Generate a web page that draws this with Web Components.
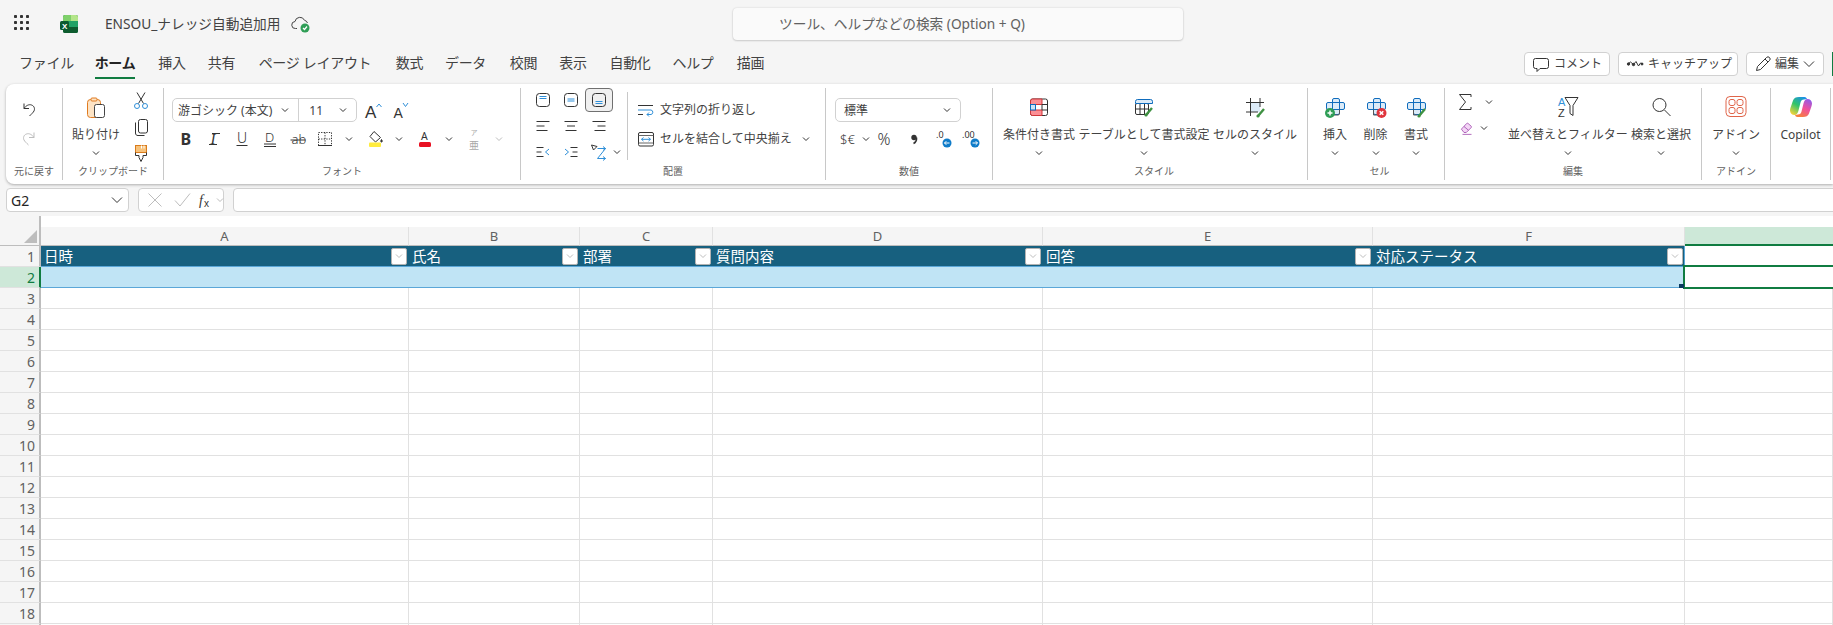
<!DOCTYPE html>
<html lang="ja">
<head>
<meta charset="utf-8">
<title>ENSOU_ナレッジ自動追加用</title>
<style>
html, body { margin: 0; height: 100%; }
body {
  display: flex; flex-direction: column; height: 100vh; overflow: hidden;
  background: #f5f5f5; color: #424242;
  font-family: "Noto Sans", "Noto Sans CJK JP", sans-serif; font-size: 12px;
}
</style>
</head>
<body>
<x-titlebar></x-titlebar>
<x-menubar></x-menubar>
<x-ribbon></x-ribbon>
<x-formulabar></x-formulabar>
<x-sheet></x-sheet>
<script>
((global) => {
  'use strict';

  const D = '#333333', B = '#2f8fd8', FONT = 'Noto Sans, Noto Sans CJK JP, sans-serif', LS = 'Liberation Sans, sans-serif';
  const txt = (x, y, size, s, extra = '') =>
    `<text x="${x}" y="${y}" font-size="${size}" font-family="${FONT}" fill="${D}" stroke="none" ${extra}>${s}</text>`;
  const ls = (x, y, size, s, fill = D) =>
    `<text x="${x}" y="${y}" font-size="${size}" font-family="${LS}" fill="${fill}" stroke="none">${s}</text>`;
  const brush = (x, y) => `<path d="M${x} ${y + 7}l6-7" stroke="#3f9142" stroke-width="2.4" fill="none"/><circle cx="${x}" cy="${y + 7}" r="1.6" fill="#3f9142" stroke="none"/>`;
  const cells = '<rect x="9.500" y="3.500" width="7" height="16" rx="1.500" fill="#dcebf8" stroke="#0f6cbd"/><rect x="3.500" y="7.500" width="18" height="7" rx="1.500" fill="#dcebf8" stroke="#0f6cbd"/><path d="M9.500 7.500v7M16.500 7.500v7" stroke="#0f6cbd" fill="none"/>';

  // 24x24 canvas, centre of the canvas is the centre of the icon
  const ICONS = {
    chev: '<path d="M9 10.500l3 3 3-3"/>',
    chevbig: '<path d="M7 9.500l5 5 5-5"/>',
    undo: '<path d="M7 5.500v5h5M7 10.500c2-3 5-4.500 7.500-3.500 3 1 3.500 4 2.500 6-.8 1.500-2.500 3-4.500 5"/>',
    redo: '<g stroke="#bdbdbd" transform="translate(24 0) scale(-1 1)"><path d="M7 5.500v5h5M7 10.500c2-3 5-4.500 7.500-3.500 3 1 3.500 4 2.500 6-.8 1.500-2.500 3-4.500 5"/></g>',
    paste: '<rect x="3.500" y="3.500" width="13" height="18" rx="3" fill="#fde3c4" stroke="#e07b20"/><rect x="7" y="2" width="6" height="3" rx="1" fill="#fde3c4" stroke="#e07b20"/><rect x="10.500" y="8.500" width="10" height="13" rx="2" fill="#fff" stroke="#444"/>',
    cut: `<path d="M9.500 14.500L16 3.500M14.500 14.500L8 3.500"/><circle cx="8" cy="17" r="2.500" stroke="${B}"/><circle cx="16" cy="17" r="2.500" stroke="${B}"/>`,
    copy: '<rect x="9.500" y="4.500" width="9" height="13.500" rx="2"/><path d="M6.500 7.500v10.500c0 1.800 1 2.500 2.500 2.500h6.500"/>',
    painter: '<rect x="6.500" y="4.500" width="11" height="7" fill="#f7c27b" stroke="#d97b1b"/><path d="M12.500 4.500v3M15 4.500v3" stroke="#fff"/><path d="M6.500 11.500v3h3.500v2l2 4 2-4v-2h3.500v-3"/>',
    grow: ls(6, 19.500, 17, 'A') + `<path d="M17.500 9l2.500-3 2.500 3" stroke="${B}"/>`,
    shrink: ls(6.500, 20, 14, 'A') + `<path d="M16 5l2.500 3.500 2.500-3.500" stroke="${B}"/>`,
    bold: txt(6.500, 18, 16, 'B', 'font-weight="700"'),
    italic: `<text x="8.500" y="17" font-size="15" font-style="italic" font-family="Liberation Serif, serif" fill="${D}" stroke="none">I</text><path d="M7 17.500h8M10 6.500h8"/>`,
    under: txt(7, 16, 14, 'U', 'font-weight="300"') + '<path d="M6.500 18.500h11"/>',
    dunder: txt(7, 15, 13, 'D', 'font-weight="300"') + '<path d="M6 17h12M6 19.500h12"/>',
    strike: txt(5.500, 17, 13, 'ab', 'font-weight="300"') + '<path d="M4.500 13h15"/>',
    border: '<rect x="5.500" y="5.500" width="13" height="13" stroke-dasharray="1.300 1.300"/><path d="M12 5.500v13M5.500 12h13" stroke-dasharray="1.300 1.300"/><path d="M5 18.500h14"/>',
    fill: '<path d="M11 4.500l6.500 6-5 4.500-5.500-5.500z"/><path d="M18.500 12.500c1 1.300 1 2.500 0 2.500s-1-1.200 0-2.500z" fill="#333"/><rect x="6" y="15.500" width="12" height="4.500" rx="1" fill="#ffec3d" stroke="none"/>',
    color: txt(8, 13, 10.500, 'A') + '<rect x="6" y="15" width="12" height="5" rx="1.500" fill="#e81123" stroke="none"/>',
    phonetic: `<text x="8.500" y="7.500" font-size="7" font-family="Noto Sans CJK JP" fill="#a8a8a8" stroke="none">ア</text><text x="7" y="21.500" font-size="10" font-family="Noto Sans CJK JP" fill="#a8a8a8" stroke="none">亜</text>`,
    vtop: `<rect x="5.500" y="5.500" width="13" height="13" rx="3"/><path d="M8.500 8.500h7M8.500 10.500h7" stroke="${B}"/>`,
    vmid: `<rect x="5.500" y="5.500" width="13" height="13" rx="3"/><path d="M8.500 11h7M8.500 13h7" stroke="${B}"/>`,
    vbot: `<rect x="5.500" y="5.500" width="13" height="13" rx="3"/><path d="M8.500 13.500h7M8.500 15.500h7" stroke="${B}"/>`,
    hleft: '<path d="M5.500 7.500h13M5.500 12h8M5.500 16.500h11"/>',
    hcen: '<path d="M5.500 7.500h13M8 12h8M6.500 16.500h11"/>',
    hright: '<path d="M5.500 7.500h13M10.500 12h8M7.500 16.500h11"/>',
    outdent: `<path d="M5.500 7.500h7M5.500 12h5M5.500 16.500h7"/><path d="M18 9l-3.500 3 3.500 3" stroke="${B}"/>`,
    indent: `<path d="M11.500 7.500h7M13.500 12h5M11.500 16.500h7"/><path d="M6 9l3.500 3-3.500 3" stroke="${B}"/>`,
    orient: `<path d="M4.500 5l5.500 1.500-3.500 3.500z"/><path d="M10.500 8.500h8l-8 10h8M16 6.500l2.500 2-2.500 2M16 16.500l2.500 2-2.500 2" stroke="${B}"/>`,
    wrap: `<path d="M4 7.500h15M4 16.500h5"/><path d="M4 12h13a2.300 2.300 0 0 1 0 4.500h-4M15 14.500l-2 2 2 2" stroke="${B}"/>`,
    merge: `<rect x="4.500" y="5.500" width="15" height="13.500" rx="1.500"/><path d="M4.500 8.500h15M4.500 16h15" stroke="#666"/><path d="M7.500 12.300h9M7.500 12.300l2-1.800M7.500 12.300l2 1.800M16.500 12.300l-2-1.800M16.500 12.300l-2 1.800" stroke="${B}"/>`,
    money: txt(4, 17, 13, '$€', 'font-weight="300"'),
    pct: txt(3.500, 18, 16, '%', 'font-weight="300"'),
    comma: '<circle cx="12" cy="10.500" r="2.700" fill="#333" stroke="none"/><path d="M14.500 10.500c.3 3-1 5-3 6" stroke-width="1.600"/>',
    decinc: txt(5, 11, 9, '.0') + '<circle cx="16" cy="16" r="4.500" fill="#0f7cc9" stroke="none"/><path d="M13.500 16h5M15.300 14.200l-1.800 1.800 1.800 1.800" stroke="#fff"/>',
    decdec: txt(3, 11, 9, '.00') + '<circle cx="16" cy="16" r="4.500" fill="#0f7cc9" stroke="none"/><path d="M13.500 16h5M16.700 14.200l1.800 1.800-1.800 1.800" stroke="#fff"/>',
    cond: '<rect x="3.500" y="4" width="17" height="16.500" rx="2" fill="#fff" stroke="#333"/><path d="M3.500 9.500v-3.500a2 2 0 0 1 2-2h9.500v5.500zM3.500 15v3.500a2 2 0 0 0 2 2h9.500v-5.500z" fill="#fb8f95" stroke="#d13438"/><rect x="3.500" y="9.500" width="5" height="5.500" fill="#cfe3f6" stroke="#0f6cbd"/><path d="M15 9.500h5.500M15 15h5.500M15 9.500v5.500" stroke="#333"/>',
    table: `<rect x="3.500" y="8.500" width="13" height="11" rx="1.500" fill="#fff"/><path d="M3.500 14h13M8 8.500v11M12.500 8.500v11"/><path d="M3.500 8.500v-2a2 2 0 0 1 2-2h13a2 2 0 0 1 2 2v2z" fill="#dcebf8" stroke="#0f6cbd"/>${brush(14, 13)}`,
    cellstyle: `<rect x="7" y="7.500" width="10" height="9.500" fill="#dcebf8" stroke="none"/><path d="M3 7.500h18M3 17h12M7.500 3v18M17 3v9"/>${brush(15, 14)}`,
    insert: `${cells}<path d="M3.500 14.500v4a1.500 1.500 0 0 0 1.500 1.500h10a1.500 1.500 0 0 0 1.500-1.500v-4" stroke="#555"/><circle cx="7" cy="18" r="5" fill="#2f9e56" stroke="none"/><path d="M4.500 18h5M7 15.500v5" stroke="#fff" stroke-width="1.500"/>`,
    del: `${cells}<path d="M9.500 14.500v5.500h5" stroke="#555"/><circle cx="17.500" cy="18" r="5" fill="#e0343c" stroke="none"/><path d="M15.700 16.200l3.600 3.600M19.300 16.200l-3.600 3.600" stroke="#fff" stroke-width="1.500"/>`,
    format: `${cells}<path d="M9.500 14.500v5.500h4" stroke="#555"/>${brush(15, 14)}`,
    sigma: '<path d="M18 7v-2.500h-11.500l6 7.500-6 7.500h11.500v-2.500"/>',
    eraser: '<g transform="translate(3 3) scale(.75)"><path d="M4.500 13.500l7-7.500a1.500 1.500 0 0 1 2 0l4 3.500a1.500 1.500 0 0 1 0 2l-6.500 6.500h-3z" fill="#f3d5f5" stroke="#9a3fa8"/><path d="M8 10l6 5M6 20.500h12" stroke="#9a3fa8"/></g>',
    sort: ls(2, 11, 11, 'A', B) + ls(2, 22, 11, 'Z') + '<path d="M9 2.500h13l-5 8v10l-3-2v-8z"/>',
    find: '<circle cx="10.500" cy="10" r="6.500"/><path d="M15.500 15l6 6"/>',
    addin: '<rect x="2" y="1.500" width="20" height="20" rx="4" stroke="#e0654a" fill="#fff"/><rect x="5" y="4.500" width="6" height="6" rx="2" stroke="#e0654a"/><rect x="13" y="4.500" width="6" height="6" rx="2" stroke="#e0654a"/><rect x="5" y="12.500" width="6" height="6" rx="2" stroke="#e0654a"/><rect x="13" y="12.500" width="6" height="6" rx="2" stroke="#e0654a"/>',
    copilot: `<defs><linearGradient id="cpa" x1="0.800" y1="0" x2="0.200" y2="1"><stop offset="0" stop-color="#1b8fe8"/><stop offset="0.500" stop-color="#2fc46a"/><stop offset="1" stop-color="#f6d23a"/></linearGradient><linearGradient id="cpb" x1="0.300" y1="1" x2="0.800" y2="0"><stop offset="0" stop-color="#f7813a"/><stop offset="0.500" stop-color="#f04f9c"/><stop offset="1" stop-color="#8f5bea"/></linearGradient></defs><path d="M10 2h5.500c1.500 0 2 1 2.500 2l-3 .5c-2 0-3 1-3.500 3l-2 8c-.5 2.500-2 4.500-4 4.500-2.500 0-4.500-2-4.500-4.500 0-1 .3-2 .6-3l2.400-7c.8-2.500 3-3.500 6-3.500z" fill="url(#cpa)" stroke="none"/><path d="M14 22h-5.500c-1.500 0-2-1-2.500-2l3-.5c2 0 3-1 3.500-3l2-8c.5-2.500 2-4.500 4-4.500 2.500 0 4.500 2 4.500 4.500 0 1-.3 2-.6 3l-2.400 7c-.8 2.500-3 3.500-6 3.500z" fill="url(#cpb)" stroke="none"/>`,
    comment: '<path d="M6.500 6.500h11a2 2 0 0 1 2 2v6a2 2 0 0 1-2 2h-6.500l-3 3v-3h-1.500a2 2 0 0 1-2-2v-6a2 2 0 0 1 2-2z"/>',
    catchup: '<path d="M5 12l2.500-2 3 2.500 2.500-3 2.500 4.500 2-3 2.500 1" stroke-width="1"/><circle cx="5.500" cy="12" r="1.200" fill="#333"/><circle cx="10.500" cy="12.500" r="1.200" fill="#333"/><circle cx="19" cy="12" r="1" fill="#333"/>',
    pencil: '<path d="M5.500 18.500l1-4 9-9a2 2 0 0 1 3 3l-9 9zM14 7l3 3"/>',
    cancel: '<path d="M5.500 5.500l13 13M18.500 5.500l-13 13" stroke="#bdbdbd"/>',
    enter: '<path d="M5 12.500l5 5.500 10-12.500" stroke="#bdbdbd"/>',
    fx: `<text x="5" y="17" font-size="14" font-style="italic" font-family="Liberation Serif, serif" fill="${D}" stroke="none">f</text><text x="10" y="19" font-size="10" font-family="${LS}" fill="${D}" stroke="none">x</text>`,
    chevgrey: '<path d="M9 10.500l3 3 3-3" stroke="#bdbdbd"/>',
    waffle: [3, 9, 15].map(y => [3, 9, 15].map(x => `<rect x="${x}" y="${y}" width="3" height="3" rx=".8" fill="#333" stroke="none"/>`).join('')).join(''),
    excel: '<rect x="6" y="3" width="15" height="18" rx="2" fill="#107c41" stroke="none"/><path d="M8 3h6v6h-8v-4a2 2 0 0 1 2-2z" fill="#7fd06a" stroke="none"/><path d="M14 3h5a2 2 0 0 1 2 2v4h-7z" fill="#b4e58a" stroke="none"/><rect x="6" y="9" width="15" height="6" fill="#21a366" stroke="none"/><path d="M6 15h15v4a2 2 0 0 1-2 2h-11a2 2 0 0 1-2-2z" fill="#0e5c2f" stroke="none"/><rect x="3" y="9" width="9" height="9" rx="1.500" fill="#0a5a30" stroke="none"/><text x="5" y="16.500" font-size="8" font-weight="700" font-family="Liberation Sans" fill="#fff" stroke="none">X</text>',
    cloud: '<path d="M8 16.500h-1.500a3.500 3.500 0 0 1-.5-7 5 5 0 0 1 9.500-1.200 4 4 0 0 1 3 2.700" stroke="#444"/><circle cx="16" cy="16" r="4.500" fill="#2f9e56" stroke="none"/><path d="M14 16l1.500 1.500 2.500-3" stroke="#fff" stroke-width="1.200"/>'
  };

  class XIcon extends HTMLElement {
    connectedCallback() {
      if (this.shadowRoot) return;
      const root = this.attachShadow({ mode: 'open' });
      const w = this.getAttribute('w') || 24;
      const h = this.getAttribute('h') || 24;
      root.innerHTML = `
<style>
:host { display: inline-flex; align-items: center; justify-content: center; flex: none; width: ${w}px; height: ${h}px; }
svg { flex: none; overflow: visible; }
</style>
<svg width="24" height="24" viewBox="0 0 24 24" fill="none" stroke="${D}" stroke-width="1">${ICONS[this.getAttribute('name')] || ''}</svg>`;
    }
  }

  class XTitlebar extends HTMLElement {
    constructor() {
      super();
      this.attachShadow({ mode: 'open' }).innerHTML = `
<style>
:host { display: flex; align-items: center; height: 48px; flex: none; }
.left { width: 733px; display: flex; align-items: center; flex: none; }
.name { font-size: 13.700px; line-height: 20px; margin-left: 24px; width: 184px; white-space: nowrap; color: #424242; }
.search {
  width: 450px; height: 32px; box-sizing: border-box; background: #fafafa; border-radius: 4px;
  box-shadow: 0 0 2px rgba(0,0,0,.15), 0 1px 2px rgba(0,0,0,.14);
  padding-left: 46px; font-size: 13.700px; line-height: 32px; color: #616161; white-space: nowrap;
}
</style>
<div class="left">
  <x-icon name="waffle" style="margin-left:11px"></x-icon>
  <x-icon name="excel" style="margin-left:22px"></x-icon>
  <span class="name">ENSOU_ナレッジ自動追加用</span>
  <x-icon name="cloud"></x-icon>
</div>
<div class="search">ツール、ヘルプなどの検索 (Option + Q)</div>`;
    }
  }

  class XMenubar extends HTMLElement {
    constructor() {
      super();
      const tabs = [['ファイル', 75], ['ホーム', 62, 1], ['挿入', 52], ['共有', 47], ['ページ レイアウト', 140], ['数式', 49],
        ['データ', 63], ['校閲', 53], ['表示', 46], ['自動化', 68], ['ヘルプ', 58], ['描画', 57]];
      this.attachShadow({ mode: 'open' }).innerHTML = `
<style>
:host { display: flex; height: 36px; flex: none; justify-content: space-between; padding-left: 9px; }
.tabs { display: flex; }
.tab { display: flex; justify-content: center; font-size: 14px; color: #424242; white-space: nowrap; letter-spacing: -.3px; }
.tab span { display: block; height: 29px; line-height: 29px; }
.tab.on span { font-weight: 700; color: #242424; border-bottom: 2px solid #107c41; }
.btns { display: flex; gap: 8px; padding-top: 4px; }
.btn {
  display: flex; align-items: center; height: 24px; box-sizing: border-box;
  background: #fff; border: 1px solid #d1d1d1; border-radius: 4px; font-size: 12px; line-height: 20px; color: #424242; white-space: nowrap;
}
.stub { width: 1px; height: 24px; background: #107c41; }
</style>
<div class="tabs">${tabs.map(([t, w, on]) => `<div class="tab${on ? ' on' : ''}" style="width:${w}px"><span>${t}</span></div>`).join('')}</div>
<div class="btns">
  <div class="btn" style="width:86px;padding-left:4px"><x-icon name="comment" w="24" style="margin-right:1px"></x-icon>コメント</div>
  <div class="btn" style="width:120px;padding-left:4px"><x-icon name="catchup" w="24" style="margin-right:1px"></x-icon>キャッチアップ</div>
  <div class="btn" style="width:78px;padding-left:4px"><x-icon name="pencil" w="24"></x-icon>編集<x-icon name="chevbig" w="20"></x-icon></div>
  <div class="stub"></div>
</div>`;
    }
  }

  class RGroup extends HTMLElement {
    constructor() {
      super();
      this.attachShadow({ mode: 'open' }).innerHTML = `
<style>
:host { display: flex; flex-direction: column; flex: none; box-sizing: border-box; height: 92px; margin: 4px 0; border-right: 1px solid #c8c8c8; }
.c { flex: 1; display: flex; min-height: 0; }
.l { height: 18px; line-height: 18px; text-align: center; font-size: 10px; color: #616161; white-space: nowrap; }
</style>
<div class="c"><slot></slot></div>
<div class="l">${this.getAttribute('label') || ''}</div>`;
    }
  }

  class RBig extends HTMLElement {
    constructor() {
      super();
      const chev = this.hasAttribute('nochev') ? '' : '<x-icon name="chev" h="18"></x-icon>';
      this.attachShadow({ mode: 'open' }).innerHTML = `
<style>
:host { display: flex; flex-direction: column; align-items: center; flex: none; }
.i { height: 38px; display: flex; align-items: center; }
.t { height: 18px; line-height: 18px; font-size: 12px; color: #424242; white-space: nowrap; }
</style>
<div class="i"><x-icon name="${this.getAttribute('icon')}"></x-icon></div>
<div class="t">${this.getAttribute('label')}</div>
${chev}`;
    }
  }

  class RCombo extends HTMLElement {
    constructor() {
      super();
      const parts = (this.getAttribute('parts') || '').split('|').map(p => p.split(':'));
      this.attachShadow({ mode: 'open' }).innerHTML = `
<style>
:host { display: flex; flex: none; height: 24px; box-sizing: border-box; background: #fff; border: 1px solid #d1d1d1; border-radius: 5px; font-size: 12px; color: #424242; }
.p { display: flex; align-items: center; justify-content: space-between; box-sizing: border-box; white-space: nowrap; }
.p + .p { border-left: 1px solid #d1d1d1; }
</style>
${parts.map(([t, w, pad]) => `<div class="p" style="width:${w}px;padding:0 2px 0 ${pad}px"><span>${t}</span><x-icon name="chev" w="22"></x-icon></div>`).join('')}`;
    }
  }

  class XRibbon extends HTMLElement {
    constructor() {
      super();
      const row = (items) => items.map(([n, w]) => `<x-icon name="${n}" w="${w}"></x-icon>`).join('');
      this.attachShadow({ mode: 'open' }).innerHTML = `
<style>
:host { display: flex; flex: none; height: 100px; margin-left: 6px; background: #fff; border-radius: 8px 0 0 8px; box-shadow: 0 1px 3px rgba(0,0,0,.3); }
.col { display: flex; flex-direction: column; flex: none; }
.row { display: flex; align-items: center; flex: none; }
.av { display: grid; grid-template-columns: repeat(3, 28px); grid-template-rows: 24px 27px 26px; margin-left: 8px; flex: none; }
.av > * { width: 28px; height: 100%; }
.sel { box-sizing: border-box; background: #f0f0f0; border: 1px solid #707070; border-radius: 4px; }
.vsep { width: 1px; height: 68px; margin: 4px 10px 0 14px; background: #c8c8c8; flex: none; }
.lt { font-size: 12px; line-height: 18px; color: #424242; white-space: nowrap; margin-left: 6px; }
</style>
<r-group label="元に戻す" style="width:57px">
  <div class="col" style="padding:10px 0 0 11px;gap:5px"><x-icon name="undo"></x-icon><x-icon name="redo"></x-icon></div>
</r-group>
<r-group label="クリップボード" style="width:101px">
  <r-big icon="paste" label="貼り付け" style="width:66px;padding-top:1px"></r-big>
  <div class="col"><x-icon name="cut" h="26"></x-icon><x-icon name="copy" h="26"></x-icon><x-icon name="painter" h="26"></x-icon></div>
</r-group>
<r-group label="フォント" style="width:357px">
  <div class="col" style="padding:10px 0 0 8px;gap:5px">
    <div class="row"><r-combo parts="游ゴシック (本文):126:5|11:58:10" style="width:185px"></r-combo>${row([['grow', 28], ['shrink', 28]])}</div>
    <div class="row">${row([['bold', 27], ['italic', 29], ['under', 28], ['dunder', 27], ['strike', 30], ['border', 24], ['chev', 24], ['fill', 28], ['chev', 20], ['color', 32], ['chev', 16], ['phonetic', 34], ['chevgrey', 16]])}</div>
  </div>
</r-group>
<r-group label="配置" style="width:305px">
  <div class="av">
    <x-icon name="vtop"></x-icon><x-icon name="vmid"></x-icon><x-icon name="vbot" class="sel"></x-icon>
    <x-icon name="hleft"></x-icon><x-icon name="hcen"></x-icon><x-icon name="hright"></x-icon>
    <x-icon name="outdent"></x-icon><x-icon name="indent"></x-icon>
    <div class="row" style="height:26px">${row([['orient', 28], ['chev', 8]])}</div>
  </div>
  <div class="vsep"></div>
  <div class="col" style="padding-top:10px;gap:6px">
    <div class="row"><x-icon name="wrap" w="16"></x-icon><span class="lt">文字列の折り返し</span></div>
    <div class="row" style="margin-top:-1px"><x-icon name="merge" w="16"></x-icon><span class="lt">セルを結合して中央揃え</span><x-icon name="chev" w="10" style="margin-left:9px"></x-icon></div>
  </div>
</r-group>
<r-group label="数値" style="width:167px">
  <div class="col" style="padding:10px 0 0 9px;gap:5px">
    <r-combo parts="標準:126:8" style="width:126px"></r-combo>
    <div class="row">${row([['money', 26], ['chev', 10], ['pct', 30], ['comma', 26], ['decinc', 32], ['decdec', 24]])}</div>
  </div>
</r-group>
<r-group label="スタイル" style="width:315px;padding-left:8px">
  <r-big icon="cond" label="条件付き書式" style="width:76px"></r-big>
  <r-big icon="table" label="テーブルとして書式設定" style="width:134px"></r-big>
  <r-big icon="cellstyle" label="セルのスタイル" style="width:88px"></r-big>
</r-group>
<r-group label="セル" style="width:137px;padding-left:7px">
  <r-big icon="insert" label="挿入" style="width:40px"></r-big>
  <r-big icon="del" label="削除" style="width:41px"></r-big>
  <r-big icon="format" label="書式" style="width:40px"></r-big>
</r-group>
<r-group label="編集" style="width:257px">
  <div class="col" style="width:60px;padding-top:1px">
    <div class="row" style="height:26px;padding-left:8px"><x-icon name="sigma"></x-icon><x-icon name="chev" w="8" style="margin-left:8px"></x-icon></div>
    <div class="row" style="height:26px;padding-left:10px"><x-icon name="eraser"></x-icon><x-icon name="chev" w="8" style="margin-left:1px"></x-icon></div>
  </div>
  <r-big icon="sort" label="並べ替えとフィルター" style="width:126px"></r-big>
  <r-big icon="find" label="検索と選択" style="width:60px"></r-big>
</r-group>
<r-group label="アドイン" style="width:69px">
  <r-big icon="addin" label="アドイン" style="width:68px"></r-big>
</r-group>
<r-group style="width:60px">
  <r-big icon="copilot" label="Copilot" nochev style="width:59px"></r-big>
</r-group>`;
    }
  }

  class XFormulabar extends HTMLElement {
    constructor() {
      super();
      this.attachShadow({ mode: 'open' }).innerHTML = `
<style>
:host { display: flex; flex: none; height: 24px; margin: 4px 0 0 6px; gap: 9px; }
.box { display: flex; align-items: center; box-sizing: border-box; height: 24px; background: #fff; border: 1px solid #d1d1d1; border-radius: 4px; flex: none; }
.name { width: 123px; justify-content: space-between; padding: 0 0 0 4px; font-size: 14px; color: #242424; }
.fx { width: 86px; padding-left: 2px; }
.input { flex: 1; margin-right: -4px; }
</style>
<div class="box name"><span>G2</span><x-icon name="chevbig" w="22"></x-icon></div>
<div class="box fx"><x-icon name="cancel" w="26" style="margin-left:1px"></x-icon><x-icon name="enter" w="28"></x-icon><x-icon name="fx" w="20"></x-icon><x-icon name="chevgrey" w="8"></x-icon></div>
<div class="box input"></div>`;
    }
  }

  class XFilter extends HTMLElement {
    constructor() {
      super();
      this.attachShadow({ mode: 'open' }).innerHTML = `
<style>
:host { display: flex; align-items: center; justify-content: center; flex: none; width: 16px; height: 17px; box-sizing: border-box; background: #fff; border: 1px solid #b3b3b3; border-radius: 2px; }
</style>
<x-icon name="chevgrey" w="14" h="15"></x-icon>`;
    }
  }

  class XSheet extends HTMLElement {
    constructor() {
      super();
      const heads = ['日時', '氏名', '部署', '質問内容', '回答', '対応ステータス'];
      const cols = ['A', 'B', 'C', 'D', 'E', 'F', ''];
      let html = '<div class="corner"><i></i></div>';
      html += cols.map(c => `<div class="ch${c ? '' : ' cur'}">${c}</div>`).join('');
      html += '<div class="rh">1</div>';
      html += heads.map(h => `<div class="th"><span>${h}</span><x-filter></x-filter></div>`).join('');
      html += '<div class="c g1"></div>';
      html += '<div class="rh cur">2</div>';
      html += heads.map(() => '<div class="tr"></div>').join('');
      html += '<div class="c g2"><div class="sel"><b></b></div></div>';
      for (let r = 3; r <= 19; r++) {
        html += `<div class="rh">${r < 19 ? r : ''}</div>` + cols.map(() => '<div class="c"></div>').join('');
      }
      this.attachShadow({ mode: 'open' }).innerHTML = `
<style>
:host { display: block; flex: 1; min-height: 0; margin-top: 4px; overflow: hidden; }
.grid {
  display: grid;
  grid-template-columns: 41px 368px 171px 133px 330px 330px 312px 148px;
  grid-template-rows: 30px repeat(19, 21px);
  background: #fff;
}
.corner { background: #f5f5f5; box-sizing: border-box; border-right: 2px solid #bdbdbd; border-bottom: 1px solid #bdbdbd; display: flex; align-items: flex-end; justify-content: flex-end; padding: 0 2px 2px 0; }
.corner i { width: 13px; height: 13px; background: #bdbdbd; clip-path: polygon(100% 0, 100% 100%, 0 100%); }
.ch {
  align-self: end; height: 19px; box-sizing: border-box; background: #f5f5f5; text-align: center;
  border-right: 1px solid #e1e1e1; border-bottom: 1px solid #bdbdbd;
  font-size: 13px; line-height: 18px; color: #616161;
}
.ch.cur { background: #cde8d8; border-bottom: 2px solid #107c41; border-right: 0; }
.rh {
  box-sizing: border-box; background: #f5f5f5; border-right: 2px solid #bdbdbd; border-bottom: 1px solid #e1e1e1;
  text-align: right; padding-right: 4px; font-size: 14px; line-height: 22px; color: #616161; overflow: hidden;
}
.rh.cur { background: #cde8d8; color: #107c41; border-right-color: #107c41; }
.th {
  display: flex; align-items: center; justify-content: space-between; box-sizing: border-box;
  padding: 0 2px 0 3px; background: #17607f; color: #fff; border-bottom: 1px solid #5ba7d8;
  font-size: 14.500px; line-height: 20px; white-space: nowrap;
}
.tr { background: #c0e4f5; border-bottom: 1px solid #5ba7d8; }
.c { box-sizing: border-box; border-right: 1px solid #e1e1e1; border-bottom: 1px solid #e1e1e1; }
.g1 { border-left: 1px solid #5ba7d8; border-right: 0; margin-left: -1px; }
.g2 { position: relative; border: 0; }
.sel { position: absolute; left: -2px; top: -2px; right: -10px; height: 24px; box-sizing: border-box; border: 2px solid #107c41; }
.sel b { position: absolute; left: -6px; top: 17px; width: 5px; height: 4px; background: #0b3a5e; }
</style>
<div class="grid">${html}</div>`;
    }
  }

  customElements.define('x-icon', XIcon);
  customElements.define('x-titlebar', XTitlebar);
  customElements.define('x-menubar', XMenubar);
  customElements.define('r-group', RGroup);
  customElements.define('r-big', RBig);
  customElements.define('r-combo', RCombo);
  customElements.define('x-ribbon', XRibbon);
  customElements.define('x-formulabar', XFormulabar);
  customElements.define('x-filter', XFilter);
  customElements.define('x-sheet', XSheet);
})(this);
</script>
</body>
</html>
